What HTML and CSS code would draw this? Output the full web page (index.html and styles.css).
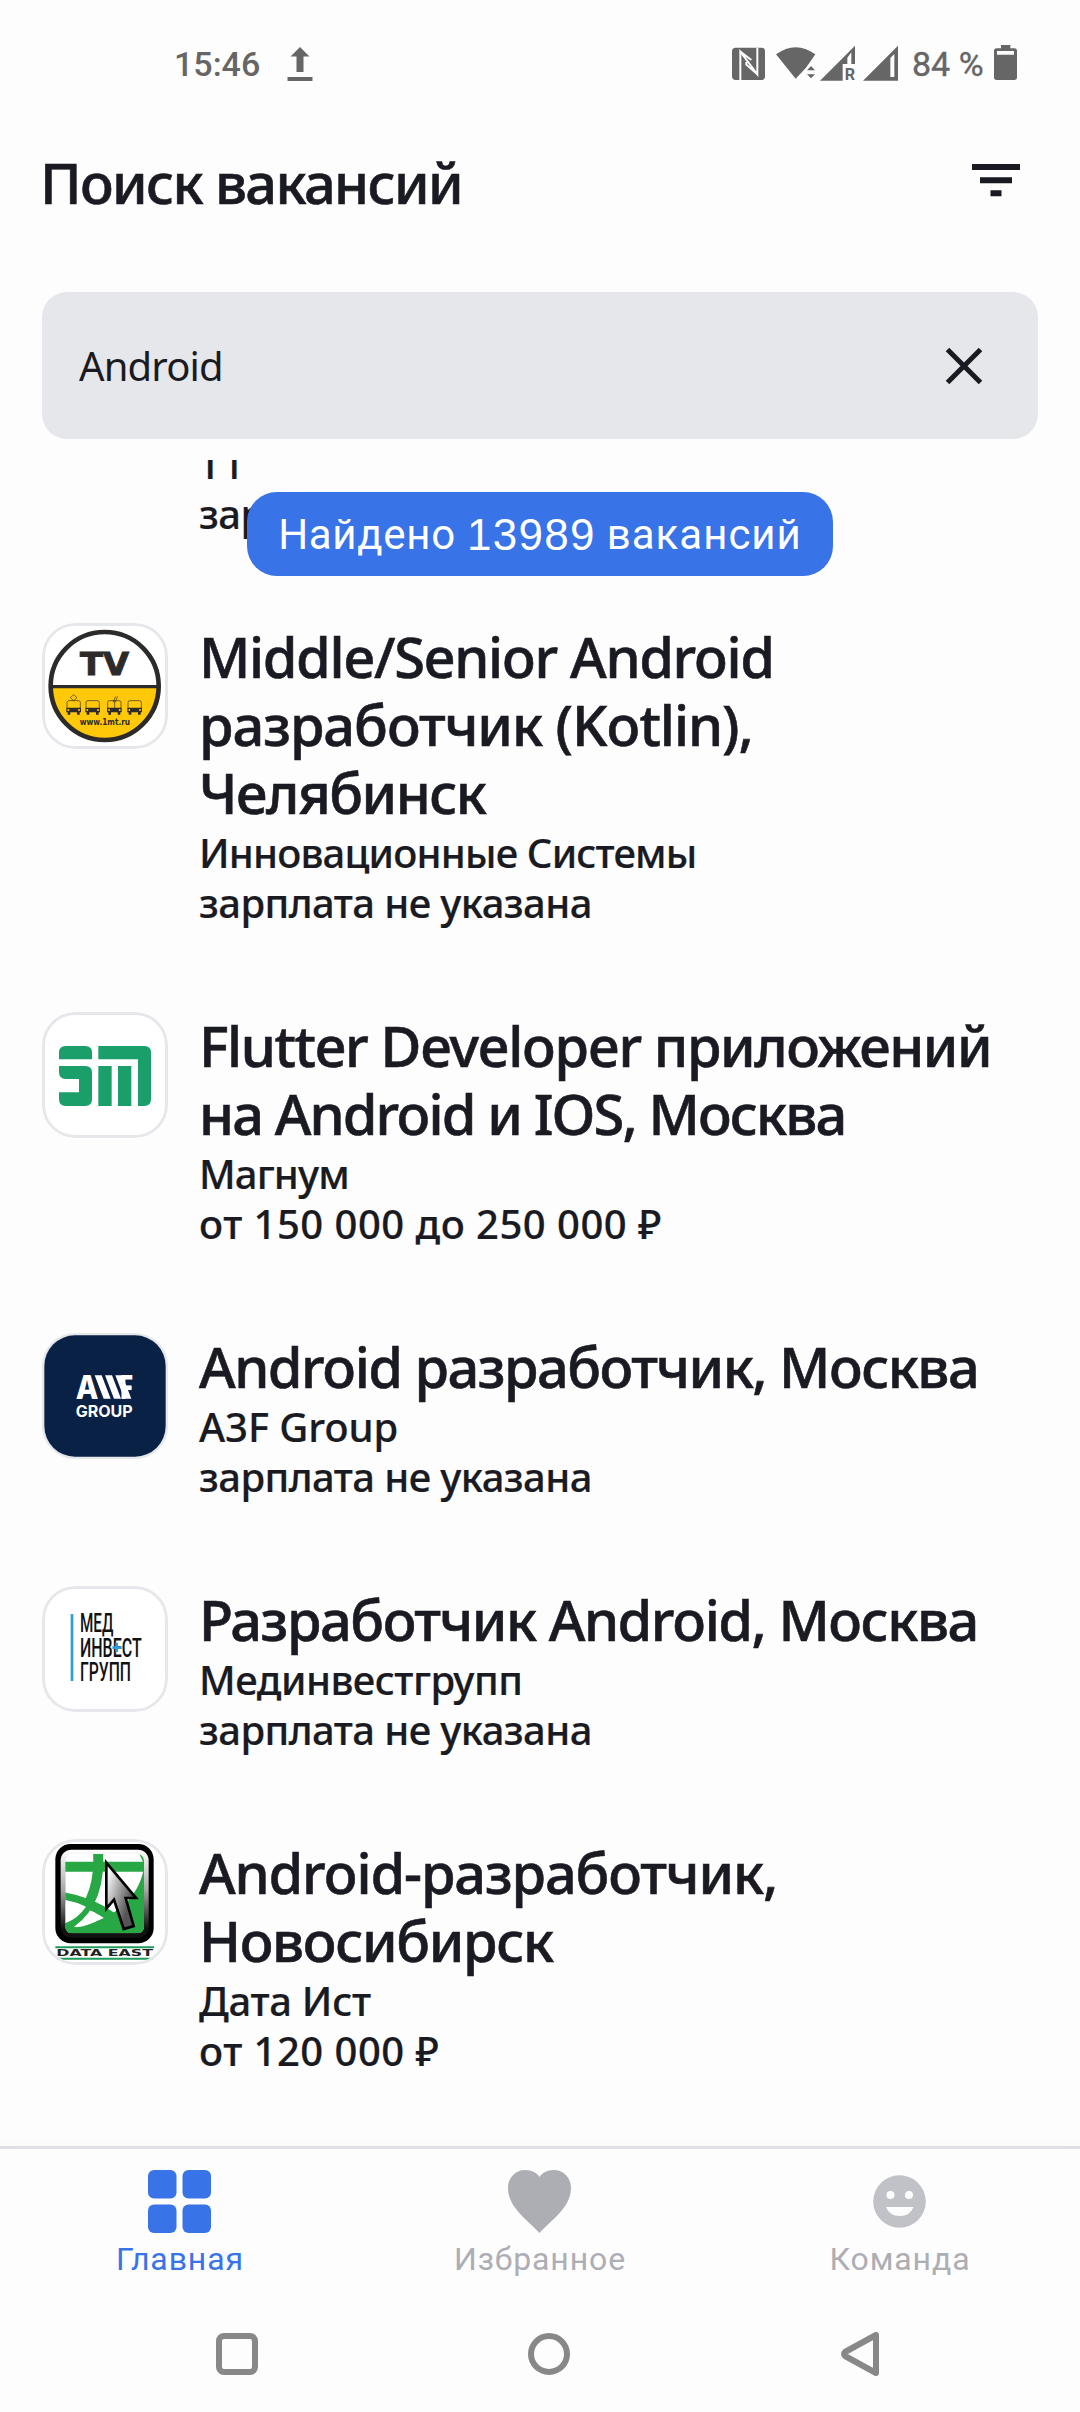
FILE: index.html
```html
<!DOCTYPE html>
<html lang="ru">
<head>
<meta charset="utf-8">
<title>Поиск вакансий</title>
<link rel="stylesheet" href="styles.css">
</head>
<body>
<div class="screen">
  <div class="status">
    <span class="time">15:46</span>
    <svg class="upload" width="28" height="38" viewBox="0 0 28 38"><path d="M14 3l9.500 9.500H17.500V28h-7V12.500H4.500zM1.500 33h25v4h-25z"/></svg>
    <div class="status-right">
      <svg width="33" height="38" viewBox="96 72 99 114"><rect x="96" y="83" width="99" height="97" rx="11"/><path class="cut" d="M121 180V95L172 163V83M139 126V134L172 163M121 95L154 120"/></svg>
      <svg class="wifi" width="40" height="38" viewBox="228 72 120 114"><path d="M228 103Q287 60 346 103L328 129 318 143 287 176zM321 151L333 138 345 151zM321 163H345L333 175z"/></svg>
      <svg class="signal-r" width="35" height="38" viewBox="360 72 105 114"><path fill-rule="evenodd" d="M360 182L465 77V132H428V182zM442 132V113L454 97V132z"/><text x="434" y="181" textLength="31" lengthAdjust="spacingAndGlyphs">R</text></svg>
      <svg class="signal" width="35" height="38" viewBox="489 72 105 114"><path fill-rule="evenodd" d="M489 182L594 77V182zM571 114V171H583V102z"/></svg>
      <span class="percent">84 %</span>
      <svg width="23" height="38" viewBox="882 72 69 114"><path fill-rule="evenodd" d="M903 75h28v10h12q8 0 8 8v79q0 8-8 8H890q-8 0-8-8V93q0-8 8-8h13zM891 93V104H942V93z"/></svg>
    </div>
  </div>

  <header class="header">
    <h1>Поиск вакансий</h1>
    <svg width="48" height="34" viewBox="0 0 48 34"><path d="M0 0h48v6H0zM8 13.200h32v6H8zM18.500 26.300h11v6h-11z"/></svg>
  </header>

  <div class="search">
    <span class="query">Android</span>
    <svg width="38" height="38" viewBox="0 0 38 38"><path d="M2.500 2.500L35.500 35.500M35.500 2.500L2.500 35.500"/></svg>
  </div>

  <main class="list">
    <div class="found"><span class="w1">Найдено</span> <span class="num">13989</span> <span class="w2">вакансий</span></div>

    <article class="item cut-item">
      <div class="logo-space"></div>
      <div class="info">
        <p>Т1</p>
        <p class="no-pay">зарплата не указана</p>
      </div>
    </article>

    <article class="item">
      <div class="logo"><svg viewBox="36 38 378 378">
        <circle cx="224" cy="227" r="162" fill="#fff"/>
        <path d="M62 227H386A162 162 0 0 1 62 227z" fill="#ffc90a"/>
        <circle cx="224" cy="227" r="162" fill="none" stroke="#2d2b2a" stroke-width="14"/>
        <path d="M62 229H386" stroke="#2d2b2a" stroke-width="10"/>
        <text x="150" y="195" textLength="147" lengthAdjust="spacingAndGlyphs" class="tv">TV</text>
        <g id="bus" stroke="#2d2b2a"><path d="M168 293V276q0-5 6-5h28q6 0 6 5v17" fill="none" stroke-width="2"/><path d="M166 292h44v14h-4v7h-8v-7h-20v7h-8v-7h-4z" fill="#2d2b2a" stroke="none"/><circle cx="172" cy="299" r="3" fill="#ffc90a" stroke="none"/><circle cx="204" cy="299" r="3" fill="#ffc90a" stroke="none"/></g>
        <use href="#bus" x="126"/><use href="#bus" x="65"/><use href="#bus" x="-57"/>
        <path d="M131 271l-10-9 10-9 10 9zM254 294V270M249 276l8-18M255 276l8-18" fill="none" stroke="#2d2b2a" stroke-width="2"/>
        <text x="149" y="345" textLength="151" lengthAdjust="spacingAndGlyphs" class="site">www.1mt.ru</text>
      </svg></div>
      <div class="info">
        <h2><span class="t1">Middle/Senior Android</span><br><span class="t2">разработчик (Kotlin),</span><br><span class="t3">Челябинск</span></h2>
        <p class="c1">Инновационные Системы</p>
        <p class="no-pay">зарплата не указана</p>
      </div>
    </article>

    <article class="item">
      <div class="logo"><svg viewBox="36 36 378 378" fill="#1b9f6a">
        <path d="M87 178V158q0-20 20-20H166q20 0 20 20V178zM87 198H166q20 0 20 20V298q0 20-20 20H107q-20 0-20-20V277H147V237H107q-20 0-20-20zM205 138H343q20 0 20 20V298q0 20-20 20H324V178H205zM205 198h40v120h-40zM264 198h40v120h-40z"/>
      </svg></div>
      <div class="info">
        <h2><span class="t4">Flutter Developer приложений</span><br><span class="t5">на Android и IOS, Москва</span></h2>
        <p class="c2">Магнум</p>
        <p class="pay">от 150 000 до 250 000 ₽</p>
      </div>
    </article>

    <article class="item">
      <div class="logo navy"><svg viewBox="36 38 378 378" fill="#fff">
        <rect x="43" y="45" width="364" height="364" rx="92" fill="#0a2146"/>
        <text x="137" y="235" textLength="68" lengthAdjust="spacingAndGlyphs" class="amark">A</text>
        <path d="M194 165h21l27 70h-21zM225 165h21l27 70h-21zM256 165h21l27 70h-21z"/>
        <text x="271" y="235" textLength="38" lengthAdjust="spacingAndGlyphs" class="amark">F</text>
        <text x="137" y="289" textLength="171" lengthAdjust="spacingAndGlyphs" class="group">GROUP</text>
      </svg></div>
      <div class="info">
        <h2><span class="t6">Android разработчик, Москва</span></h2>
        <p class="c3">A3F Group</p>
        <p class="no-pay">зарплата не указана</p>
      </div>
    </article>

    <article class="item">
      <div class="logo"><svg viewBox="36 33 378 378">
        <path d="M122 117h8v201h-8z" fill="#2a9fdc"/>
        <g class="med"><text x="150" y="172" textLength="100" lengthAdjust="spacingAndGlyphs">МЕД</text>
        <text x="150" y="246" textLength="185" lengthAdjust="spacingAndGlyphs">ИНВЕСТ</text>
        <text x="150" y="318" textLength="153" lengthAdjust="spacingAndGlyphs">ГРУПП</text></g>
        <path d="M247 218h28M260 203v28" stroke="#2a9fdc" stroke-width="8"/>
      </svg></div>
      <div class="info">
        <h2><span class="t7">Разработчик Android, Москва</span></h2>
        <p class="c4">Мединвестгрупп</p>
        <p class="no-pay">зарплата не указана</p>
      </div>
    </article>

    <article class="item">
      <div class="logo"><svg viewBox="36 33 378 378">
        <defs>
          <linearGradient id="rim" x1="0" y1="0" x2="0" y2="1"><stop offset="0" stop-color="#fff"/><stop offset=".45" stop-color="#aaa"/><stop offset=".9" stop-color="#111"/></linearGradient>
          <linearGradient id="arrow" x1="0" y1="0" x2="1" y2=".7"><stop offset=".1" stop-color="#fff"/><stop offset=".8" stop-color="#555"/></linearGradient>
          <clipPath id="tile"><rect x="106" y="78" width="236" height="238" rx="20"/></clipPath>
        </defs>
        <rect x="76" y="48" width="295" height="298" rx="46"/>
        <rect x="92" y="65" width="264" height="264" rx="32" fill="url(#rim)"/>
        <g clip-path="url(#tile)">
          <path d="M106 78h236v238H106z" fill="#fff"/>
          <path d="M100 116H350M204 70Q214 240 100 298M100 208Q180 220 250 270" stroke="#28a745" stroke-width="30" fill="none"/>
          <path d="M342 120Q316 258 138 298L106 286V316H342zM328 78h14v30z" fill="#28a745"/>
          <path d="M106 216Q140 222 168 236Q145 270 106 286zM187 250Q205 258 212 272Q180 292 140 298Q170 278 187 250z" fill="#fff"/>
        </g>
        <path d="M229 104V242L252 215 281 303 311 294 287 210H318z" fill="url(#arrow)" stroke="#000" stroke-width="8"/>
        <path d="M76 358H372" stroke="#1f9a5a" stroke-width="6"/>
        <text x="79" y="385" textLength="290" lengthAdjust="spacingAndGlyphs" class="east">DATA EAST</text>
        <path d="M80 392H368" stroke="#1f9a5a" stroke-width="6"/>
      </svg></div>
      <div class="info">
        <h2><span class="t8">Android-разработчик,</span><br><span class="t9">Новосибирск</span></h2>
        <p class="c5">Дата Ист</p>
        <p class="pay">от 120 000 ₽</p>
      </div>
    </article>
  </main>

  <nav class="tabs">
    <div class="tab active">
      <svg width="63" height="63" viewBox="0 0 63 63"><rect width="28.500" height="28.500" rx="6"/><rect x="34.500" width="28.500" height="28.500" rx="6"/><rect y="34.500" width="28.500" height="28.500" rx="6"/><rect x="34.500" y="34.500" width="28.500" height="28.500" rx="6"/></svg>
      <span>Главная</span>
    </div>
    <div class="tab">
      <svg width="63" height="63" viewBox="0 0 63 63"><path d="M31.500 63C21 51 0 38 0 18C0 7 8 0 17 0C24 0 29 3 31.500 7C34 3 39 0 46 0C55 0 63 7 63 18C63 38 42 51 31.500 63z"/></svg>
      <span>Избранное</span>
    </div>
    <div class="tab team">
      <svg width="63" height="63" viewBox="0 0 63 63"><path fill-rule="evenodd" d="M31.500 5.200a26.300 26.300 0 1 1 0 52.600a26.300 26.300 0 1 1 0-52.600zM22.500 21a4 4 0 1 0 0 8a4 4 0 1 0 0-8zM41 21a4 4 0 1 0 0 8a4 4 0 1 0 0-8zM18 37H45.500Q42 46 31.700 46T18 37z"/></svg>
      <span>Команда</span>
    </div>
  </nav>

  <div class="system">
    <svg width="42" height="46" viewBox="0 0 42 46"><rect x="3" y="5" width="36" height="36" rx="5"/></svg>
    <svg width="42" height="46" viewBox="0 0 42 46"><circle cx="21" cy="23" r="18"/></svg>
    <svg width="42" height="46" viewBox="0 0 42 46"><path d="M37 4V42L6 25Q4 23 6 21z"/></svg>
  </div>
</div>
</body>
</html>
```
FILE: styles.css
```css
* { box-sizing: border-box; margin: 0; padding: 0; }
body { background: #fdfdfd; color: #1a1b22; font-family: "Noto Sans", sans-serif; }
svg { display: block; flex: none; }

.screen { width: 1080px; height: 2412px; display: flex; flex-direction: column; overflow: hidden; }

.status { height: 126px; padding: 44px 63px 0 174px; display: flex; align-items: flex-start; color: #666; fill: #666; font: 500 34px/40px Roboto, sans-serif; }
.status span { white-space: nowrap; }
.time { width: 112px; }
.status-right { margin-left: auto; display: flex; }
.status-right svg.wifi { margin-left: 11px; }
.signal-r { margin-left: 4px; font: 700 50px Roboto, sans-serif; }
.signal { margin-left: 8px; }
.percent { width: 82px; margin: 0 0 0 14px; font-weight: 400; -webkit-text-stroke: .4px #666; }
.cut { fill: none; stroke: #fdfdfd; stroke-width: 6; }

.header { height: 166px; padding: 18px 60px 0 42px; display: flex; justify-content: space-between; align-items: flex-start; }
.header h1 { font-size: 56px; font-weight: 500; line-height: 76px; letter-spacing: -1.64px; margin-left: -2px; -webkit-text-stroke: .6px #1a1b22; }
.header svg { margin-top: 20px; fill: #1a1b22; }

.search { height: 147px; margin: 0 42px; padding: 0 55px 0 37px; border-radius: 25px; background: #e6e7eb; display: flex; align-items: center; justify-content: space-between; }
.query { font-size: 40px; line-height: 54px; letter-spacing: -.85px; }
.search svg { stroke: #1a1b22; stroke-width: 5; }

.list { position: relative; height: 1686px; margin-top: 21px; padding: 0 42px; overflow: hidden; }
.item { display: flex; gap: 32px; margin-bottom: 85px; }
.cut-item { margin-top: -22px; }
.logo-space { width: 126px; }
.logo { width: 126px; height: 126px; flex: none; border-radius: 33px; background: #fff; overflow: hidden; position: relative; }
.logo svg { width: 126px; height: 126px; }
.logo::after { content: ""; position: absolute; inset: 0; border: 3px solid #e6e7eb; border-radius: 33px; }
.navy { background: #e6e7eb; }
.navy::after { display: none; }
.info { white-space: nowrap; margin: 1px 0 -1px -1px; }
.info h2 { font-size: 56px; line-height: 68px; font-weight: 500; margin: -2px 0 2px; -webkit-text-stroke: .6px #1a1b22; }
.info p { font-size: 40px; line-height: 50px; font-weight: 500; -webkit-text-stroke: .2px #1a1b22; }
.t1 { letter-spacing: -1.38px; }
.t2 { letter-spacing: -1.06px; }
.t3 { letter-spacing: -1.5px; }
.t4 { letter-spacing: -1.46px; }
.t5 { letter-spacing: -1.9px; }
.t6 { letter-spacing: -1.53px; }
.t7 { letter-spacing: -1.48px; }
.t8 { letter-spacing: -1.15px; }
.t9 { letter-spacing: -1.35px; }
.c1 { letter-spacing: -.82px; }
.c2 { letter-spacing: -.85px; }
.c3 { letter-spacing: -.1px; }
.c4 { letter-spacing: -.5px; }
.c5 { letter-spacing: -.28px; }
.no-pay { letter-spacing: -.58px; }
.pay { letter-spacing: .48px; }

.found { position: absolute; z-index: 1; left: 247px; top: 32px; width: 586px; height: 84px; padding-top: 2px; border-radius: 30px; background: #3873e7; color: #fff; display: flex; align-items: center; justify-content: center; gap: 11px; font: 42px/50px Roboto, sans-serif; white-space: nowrap; }
.found .w1 { letter-spacing: .7px; }
.found .w2 { letter-spacing: 1px; }
.found .num { font-family: "Liberation Sans", sans-serif; font-size: 44px; letter-spacing: 1.3px; }

.tv { font: 700 98px "DejaVu Sans", sans-serif; fill: #2d2b2a; stroke: #2d2b2a; stroke-width: 3; }
.site { font: 700 25px "DejaVu Sans", sans-serif; fill: #2d2b2a; }
.amark { font: 800 96px Inter, sans-serif; }
.group { font: 700 47px Inter, sans-serif; }
.med { font: 500 76px Roboto, sans-serif; fill: #111; }
.east { font: 700 27px "DejaVu Sans", sans-serif; fill: #222; }

.tabs { height: 144px; border-top: 3px solid #dfe0e3; padding-top: 21px; display: grid; grid-template-columns: repeat(3, 1fr); color: #adaeb4; fill: #adaeb4; box-shadow: 0 -4px 10px rgba(0,0,0,.015); }
.tab { display: flex; flex-direction: column; align-items: center; font: 32px/38px Roboto, sans-serif; letter-spacing: .9px; gap: 7px; }
.tab svg { margin-right: 1px; }
.active { color: #3873e7; fill: #3873e7; }
.team svg { fill: #c1c2c7; }

.system { padding: 41px 199px 0 216px; display: flex; justify-content: space-between; fill: none; stroke: #888; stroke-width: 6; stroke-linejoin: round; }
```
